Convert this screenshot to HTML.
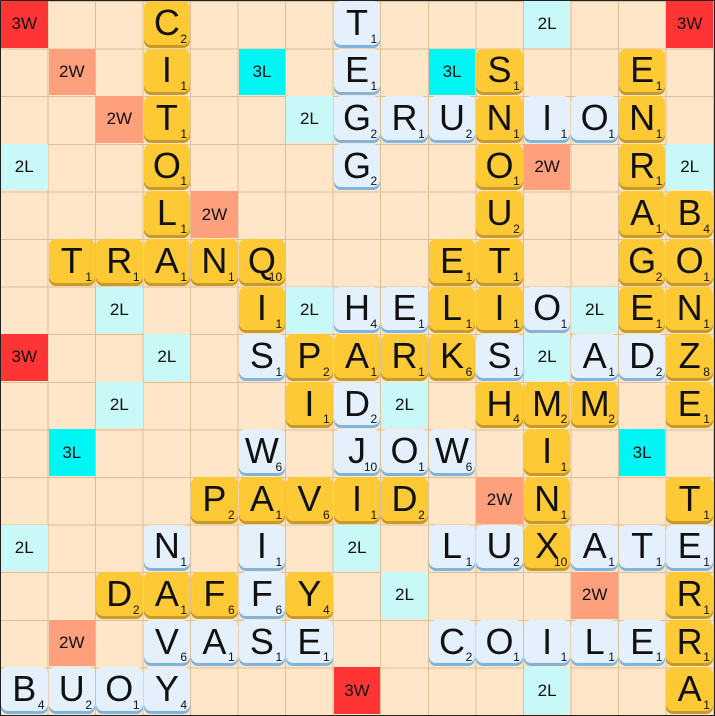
<!DOCTYPE html>
<html><head><meta charset="utf-8"><style>
html,body{margin:0;padding:0;background:#111;}
#b{position:relative;width:713px;height:714px;border:1px solid #222;background-color:#ffe6c8;
background-image:repeating-linear-gradient(90deg,transparent 0,transparent 46.53px,#d9bf9a 46.53px,#d9bf9a 47.53px),repeating-linear-gradient(0deg,transparent 0,transparent 46.6px,#d9bf9a 46.6px,#d9bf9a 47.6px);
font-family:"Liberation Sans",sans-serif;overflow:hidden}
#b div{position:absolute;left:calc(var(--c)*47.53px);top:calc(var(--r)*47.6px);width:46.53px;height:46.6px;box-sizing:border-box}
.p{display:flex;align-items:center;justify-content:center;font-size:17px;color:#111}
.w3{background:#ff3535}.w2{background:#ffa07c}.l2{background:#c8f8f8}.l3{background:#00f5f5}
.y,.t{border-radius:7px;display:flex;align-items:center;justify-content:center;font-size:36px;color:#111;padding-bottom:3px}
.y{background:#fdc935;box-shadow:inset 0 -3px 0 #c9992a}
.t{background:#e4f1fc;box-shadow:inset 0 -3px 0 #7fb3e0}
.y i,.t i{position:absolute;right:3px;bottom:2px;font-size:12px;font-style:normal}
</style></head><body><div id="b">
<div class="p w3" style="--c:0;--r:0">3W</div><div class="p w3" style="--c:14;--r:0">3W</div><div class="p l2" style="--c:11;--r:0">2L</div>
<div class="p w2" style="--c:1;--r:1">2W</div><div class="p l3" style="--c:5;--r:1">3L</div><div class="p l3" style="--c:9;--r:1">3L</div>
<div class="p w2" style="--c:2;--r:2">2W</div><div class="p l2" style="--c:6;--r:2">2L</div>
<div class="p l2" style="--c:0;--r:3">2L</div><div class="p w2" style="--c:11;--r:3">2W</div><div class="p l2" style="--c:14;--r:3">2L</div>
<div class="p w2" style="--c:4;--r:4">2W</div>
<div class="p l2" style="--c:2;--r:6">2L</div><div class="p l2" style="--c:6;--r:6">2L</div><div class="p l2" style="--c:12;--r:6">2L</div>
<div class="p w3" style="--c:0;--r:7">3W</div><div class="p l2" style="--c:3;--r:7">2L</div><div class="p l2" style="--c:11;--r:7">2L</div>
<div class="p l2" style="--c:2;--r:8">2L</div><div class="p l2" style="--c:8;--r:8">2L</div>
<div class="p l3" style="--c:1;--r:9">3L</div><div class="p l3" style="--c:13;--r:9">3L</div>
<div class="p w2" style="--c:10;--r:10">2W</div>
<div class="p l2" style="--c:0;--r:11">2L</div><div class="p l2" style="--c:7;--r:11">2L</div>
<div class="p l2" style="--c:8;--r:12">2L</div><div class="p w2" style="--c:12;--r:12">2W</div>
<div class="p w2" style="--c:1;--r:13">2W</div>
<div class="p w3" style="--c:7;--r:14">3W</div><div class="p l2" style="--c:11;--r:14">2L</div>

<div class="y" style="--c:3;--r:0">C<i>2</i></div><div class="t" style="--c:7;--r:0">T<i>1</i></div>
<div class="y" style="--c:3;--r:1">I<i>1</i></div><div class="t" style="--c:7;--r:1">E<i>1</i></div><div class="y" style="--c:10;--r:1">S<i>1</i></div><div class="y" style="--c:13;--r:1">E<i>1</i></div>
<div class="y" style="--c:3;--r:2">T<i>1</i></div><div class="t" style="--c:7;--r:2">G<i>2</i></div><div class="t" style="--c:8;--r:2">R<i>1</i></div><div class="t" style="--c:9;--r:2">U<i>2</i></div><div class="y" style="--c:10;--r:2">N<i>1</i></div><div class="t" style="--c:11;--r:2">I<i>1</i></div><div class="t" style="--c:12;--r:2">O<i>1</i></div><div class="y" style="--c:13;--r:2">N<i>1</i></div>
<div class="y" style="--c:3;--r:3">O<i>1</i></div><div class="t" style="--c:7;--r:3">G<i>2</i></div><div class="y" style="--c:10;--r:3">O<i>1</i></div><div class="y" style="--c:13;--r:3">R<i>1</i></div>
<div class="y" style="--c:3;--r:4">L<i>1</i></div><div class="y" style="--c:10;--r:4">U<i>2</i></div><div class="y" style="--c:13;--r:4">A<i>1</i></div><div class="y" style="--c:14;--r:4">B<i>4</i></div>
<div class="y" style="--c:1;--r:5">T<i>1</i></div><div class="y" style="--c:2;--r:5">R<i>1</i></div><div class="y" style="--c:3;--r:5">A<i>1</i></div><div class="y" style="--c:4;--r:5">N<i>1</i></div><div class="y" style="--c:5;--r:5">Q<i>10</i></div><div class="y" style="--c:9;--r:5">E<i>1</i></div><div class="y" style="--c:10;--r:5">T<i>1</i></div><div class="y" style="--c:13;--r:5">G<i>2</i></div><div class="y" style="--c:14;--r:5">O<i>1</i></div>
<div class="y" style="--c:5;--r:6">I<i>1</i></div><div class="t" style="--c:7;--r:6">H<i>4</i></div><div class="t" style="--c:8;--r:6">E<i>1</i></div><div class="y" style="--c:9;--r:6">L<i>1</i></div><div class="y" style="--c:10;--r:6">I<i>1</i></div><div class="t" style="--c:11;--r:6">O<i>1</i></div><div class="y" style="--c:13;--r:6">E<i>1</i></div><div class="y" style="--c:14;--r:6">N<i>1</i></div>
<div class="t" style="--c:5;--r:7">S<i>1</i></div><div class="y" style="--c:6;--r:7">P<i>2</i></div><div class="y" style="--c:7;--r:7">A<i>1</i></div><div class="y" style="--c:8;--r:7">R<i>1</i></div><div class="y" style="--c:9;--r:7">K<i>6</i></div><div class="t" style="--c:10;--r:7">S<i>1</i></div><div class="t" style="--c:12;--r:7">A<i>1</i></div><div class="t" style="--c:13;--r:7">D<i>2</i></div><div class="y" style="--c:14;--r:7">Z<i>8</i></div>
<div class="y" style="--c:6;--r:8">I<i>1</i></div><div class="t" style="--c:7;--r:8">D<i>2</i></div><div class="y" style="--c:10;--r:8">H<i>4</i></div><div class="y" style="--c:11;--r:8">M<i>2</i></div><div class="y" style="--c:12;--r:8">M<i>2</i></div><div class="y" style="--c:14;--r:8">E<i>1</i></div>
<div class="t" style="--c:5;--r:9">W<i>6</i></div><div class="t" style="--c:7;--r:9">J<i>10</i></div><div class="t" style="--c:8;--r:9">O<i>1</i></div><div class="t" style="--c:9;--r:9">W<i>6</i></div><div class="y" style="--c:11;--r:9">I<i>1</i></div>
<div class="y" style="--c:4;--r:10">P<i>2</i></div><div class="y" style="--c:5;--r:10">A<i>1</i></div><div class="y" style="--c:6;--r:10">V<i>6</i></div><div class="y" style="--c:7;--r:10">I<i>1</i></div><div class="y" style="--c:8;--r:10">D<i>2</i></div><div class="y" style="--c:11;--r:10">N<i>1</i></div><div class="y" style="--c:14;--r:10">T<i>1</i></div>
<div class="t" style="--c:3;--r:11">N<i>1</i></div><div class="t" style="--c:5;--r:11">I<i>1</i></div><div class="t" style="--c:9;--r:11">L<i>1</i></div><div class="t" style="--c:10;--r:11">U<i>2</i></div><div class="y" style="--c:11;--r:11">X<i>10</i></div><div class="t" style="--c:12;--r:11">A<i>1</i></div><div class="t" style="--c:13;--r:11">T<i>1</i></div><div class="t" style="--c:14;--r:11">E<i>1</i></div>
<div class="y" style="--c:2;--r:12">D<i>2</i></div><div class="y" style="--c:3;--r:12">A<i>1</i></div><div class="y" style="--c:4;--r:12">F<i>6</i></div><div class="t" style="--c:5;--r:12">F<i>6</i></div><div class="y" style="--c:6;--r:12">Y<i>4</i></div><div class="y" style="--c:14;--r:12">R<i>1</i></div>
<div class="t" style="--c:3;--r:13">V<i>6</i></div><div class="t" style="--c:4;--r:13">A<i>1</i></div><div class="t" style="--c:5;--r:13">S<i>1</i></div><div class="t" style="--c:6;--r:13">E<i>1</i></div><div class="t" style="--c:9;--r:13">C<i>2</i></div><div class="t" style="--c:10;--r:13">O<i>1</i></div><div class="t" style="--c:11;--r:13">I<i>1</i></div><div class="t" style="--c:12;--r:13">L<i>1</i></div><div class="t" style="--c:13;--r:13">E<i>1</i></div><div class="y" style="--c:14;--r:13">R<i>1</i></div>
<div class="t" style="--c:0;--r:14">B<i>4</i></div><div class="t" style="--c:1;--r:14">U<i>2</i></div><div class="t" style="--c:2;--r:14">O<i>1</i></div><div class="t" style="--c:3;--r:14">Y<i>4</i></div><div class="y" style="--c:14;--r:14">A<i>1</i></div>
</div></body></html>
